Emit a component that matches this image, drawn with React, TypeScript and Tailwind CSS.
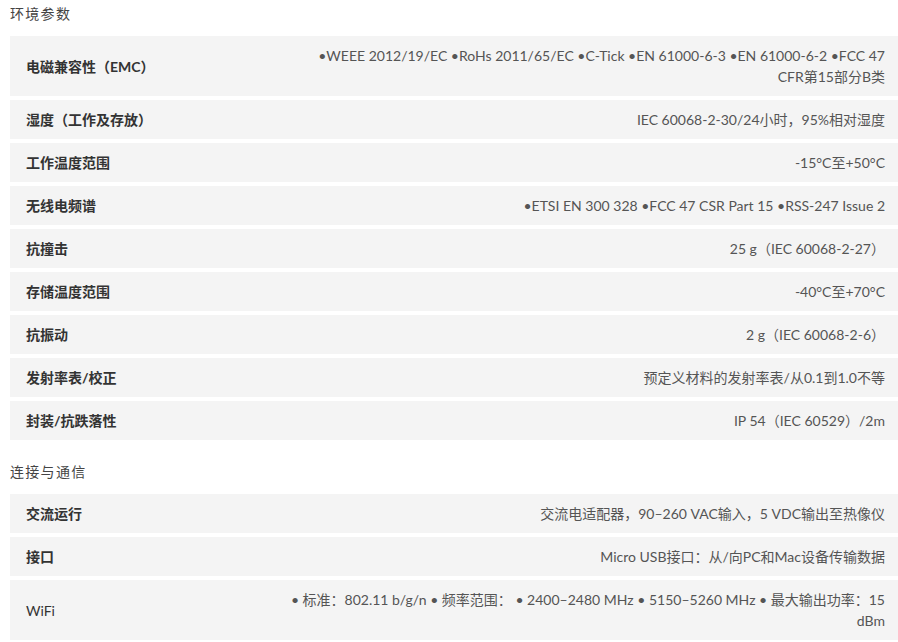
const font = { fontFamily: '"Lato", "Noto Sans CJK SC", sans-serif' };

type Spec = { label: string; value: string; plain?: boolean };

const env: Spec[] = [
  {
    label: '电磁兼容性（EMC）',
    value: '•WEEE 2012/19/EC •RoHs 2011/65/EC •C-Tick •EN 61000-6-3 •EN 61000-6-2 •FCC 47 CFR第15部分B类',
  },
  { label: '湿度（工作及存放）', value: 'IEC 60068-2-30/24小时，95%相对湿度' },
  { label: '工作温度范围', value: '-15°C至+50°C' },
  { label: '无线电频谱', value: '•ETSI EN 300 328 •FCC 47 CSR Part 15 •RSS-247 Issue 2' },
  { label: '抗撞击', value: '25 g（IEC 60068-2-27）' },
  { label: '存储温度范围', value: '-40°C至+70°C' },
  { label: '抗振动', value: '2 g（IEC 60068-2-6）' },
  { label: '发射率表/校正', value: '预定义材料的发射率表/从0.1到1.0不等' },
  { label: '封装/抗跌落性', value: 'IP 54（IEC 60529）/2m' },
];

const conn: Spec[] = [
  { label: '交流运行', value: '交流电适配器，90–260 VAC输入，5 VDC输出至热像仪' },
  { label: '接口', value: 'Micro USB接口：从/向PC和Mac设备传输数据' },
  {
    label: 'WiFi',
    value: '• 标准：802.11 b/g/n • 频率范围： • 2400–2480 MHz • 5150–5260 MHz • 最大输出功率：15 dBm',
    plain: true,
  },
];

function Row({ spec }: { spec: Spec }) {
  return (
    <div className="flex items-center bg-[#f4f4f4] pl-4 pr-[13px] py-[9px] leading-[21px] text-[14px]">
      <div className={`w-[264px] shrink-0 text-[#333] ${spec.plain ? 'font-normal' : 'font-bold'}`}>
        {spec.label}
      </div>
      <div className="flex-1 text-right text-[#555]">{spec.value}</div>
    </div>
  );
}

function Section({ title, rows, first }: { title: string; rows: Spec[]; first?: boolean }) {
  return (
    <section>
      <h2 className={`text-[14px] leading-[28px] text-[#444] tracking-[1.3px] mb-[8px] ${first ? '' : 'mt-[18px]'}`}>
        {title}
      </h2>
      <div className="flex flex-col gap-1">
        {rows.map((r) => (
          <Row key={r.label} spec={r} />
        ))}
      </div>
    </section>
  );
}

export default function App() {
  return (
    <div className="min-h-screen bg-white pl-[10px]" style={font}>
      <Section title="环境参数" rows={env} first />
      <Section title="连接与通信" rows={conn} />
    </div>
  );
}
